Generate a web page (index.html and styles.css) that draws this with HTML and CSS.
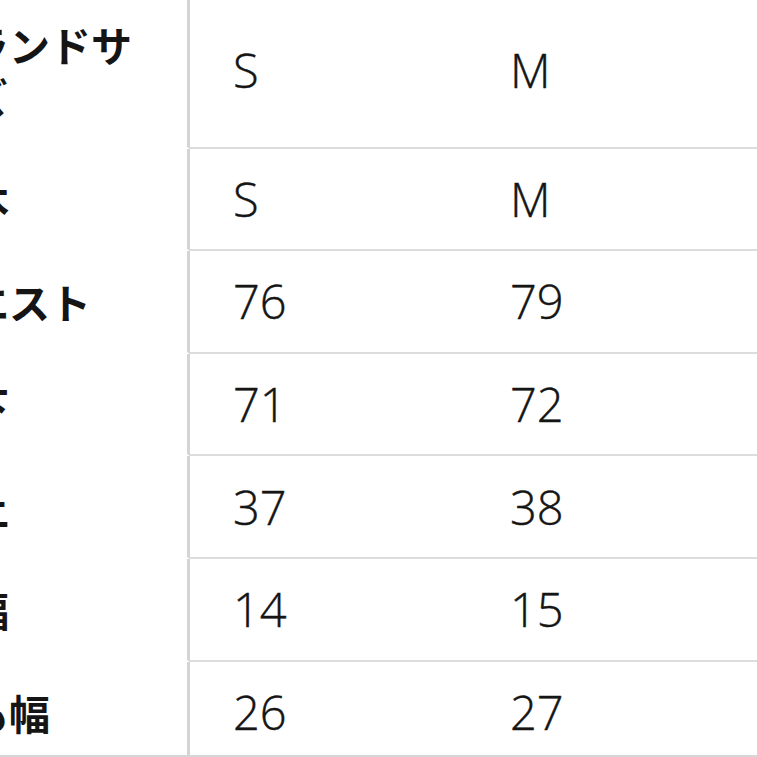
FILE: index.html
```html
<!DOCTYPE html>
<html lang="ja">
<head>
<meta charset="utf-8">
<link rel="stylesheet" href="styles.css">
</head>
<body>
<div class="frame">
  <table class="size-table">
    <colgroup>
      <col class="col-label">
      <col class="col-val">
      <col class="col-last">
    </colgroup>
    <tbody>
      <tr><th>ブランドサイズ</th><td>S</td><td>M</td></tr>
      <tr><th>日本</th><td>S</td><td>M</td></tr>
      <tr><th>ウエスト</th><td>76</td><td>79</td></tr>
      <tr><th>股下</th><td>71</td><td>72</td></tr>
      <tr><th>股上</th><td>37</td><td>38</td></tr>
      <tr><th>裾幅</th><td>14</td><td>15</td></tr>
      <tr><th>もも幅</th><td>26</td><td>27</td></tr>
    </tbody>
  </table>
</div>
</body>
</html>
```
FILE: styles.css
```css
html, body {
  margin: 0;
  padding: 0;
  background: #ffffff;
}

.frame {
  width: 757px;
  height: 755px;
  overflow: hidden;
  border-bottom: 2px solid #d6d6d6;
}

.size-table {
  border-collapse: separate;
  border-spacing: 0;
  table-layout: fixed;
  width: 877px;
  margin-top: -6px;
  margin-left: -93px;
  color: #151515;
}

.col-label { width: 283px; }
.col-val { width: 277px; }
.col-last { width: 317px; }

.size-table th {
  font-family: "Noto Sans CJK JP", sans-serif;
  font-weight: 700;
  font-size: 41px;
  line-height: 52px;
  text-align: left;
  padding: 24.3px 41px 24.3px 20px;
  border-right: 3px solid #d4d4d4;
  border-bottom: 2px solid transparent;
  vertical-align: middle;
}

.size-table td {
  font-family: "Open Sans", "Noto Sans CJK JP", sans-serif;
  font-weight: 300;
  font-size: 47px;
  line-height: 52px;
  text-align: left;
  padding: 0 0 0 43px;
  border-bottom: 2px solid #dcdcdc;
  vertical-align: middle;
  -webkit-text-stroke: 0.4px #151515;
}
```
